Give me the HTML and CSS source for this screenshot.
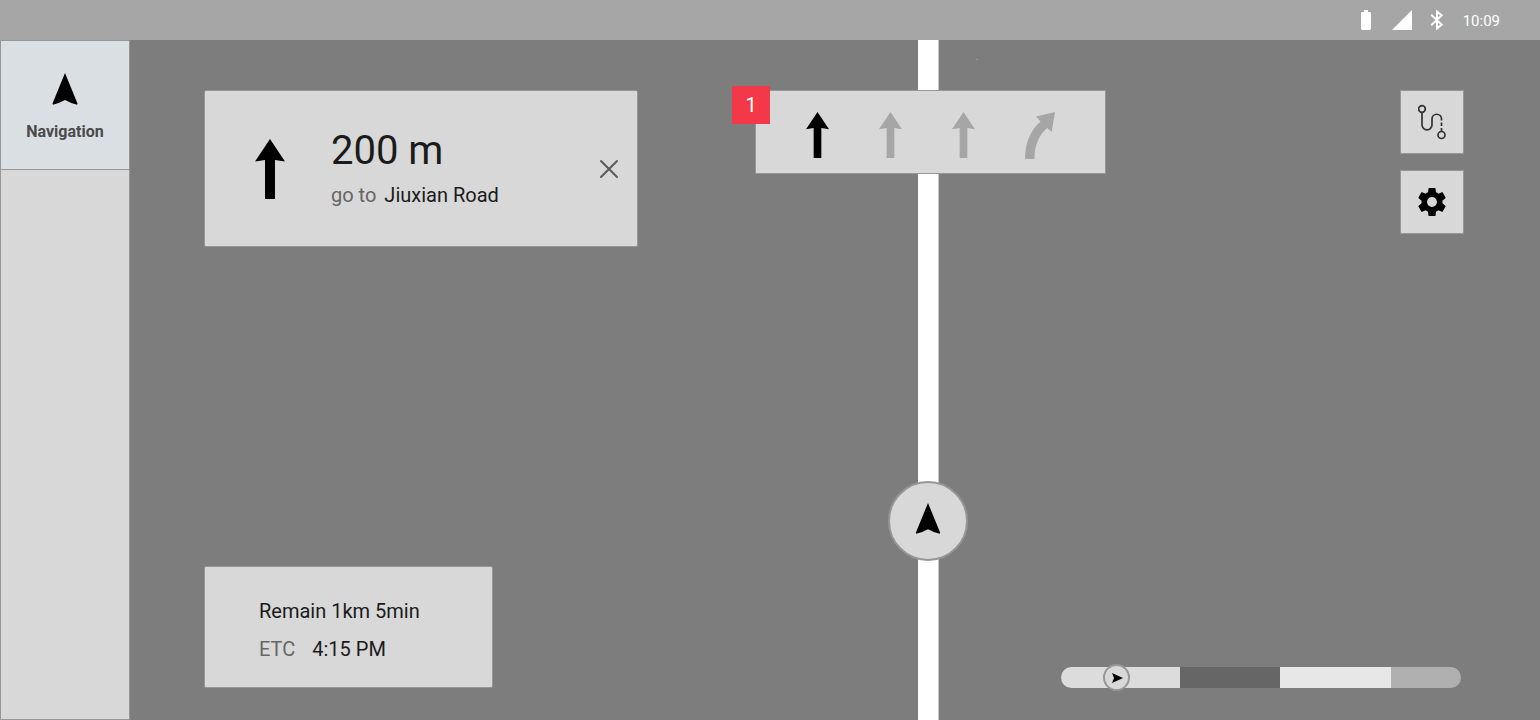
FILE: index.html
```html
<!DOCTYPE html>
<html lang="en">
<head>
<meta charset="utf-8">
<title>Navigation</title>
<link rel="stylesheet" href="styles.css">
</head>
<body>
<svg class="symbols" aria-hidden="true">
  <symbol id="pointer" viewBox="0 0 26 32"><path d="M13 0 L25.5 30.5 Q25.600 31.800 24.300 31.600 Q18.500 30 13 27 Q7.500 30 1.700 31.600 Q.4 31.800 .5 30.500 Z"/></symbol>
  <symbol id="straight" viewBox="0 0 30 60"><path d="M15 0 L30 22.500 L20 21 V60 H10 V21 L0 22.500 Z"/></symbol>
</svg>
<header class="status">
  <svg class="status-battery" viewBox="0 0 10 20" role="img" aria-label="Battery"><path d="M3 0 H7 V2 H8.600 Q10 2 10 3.400 V18.600 Q10 20 8.600 20 H1.400 Q0 20 0 18.600 V3.400 Q0 2 1.400 2 H3 Z"/></svg>
  <svg class="status-signal" viewBox="0 0 20 20" role="img" aria-label="Signal"><path d="M20 0 V20 H0 Z"/></svg>
  <svg class="status-bluetooth" viewBox="0 0 14 20" role="img" aria-label="Bluetooth"><path d="M1.200 4.800 L11.700 14.600 L7 18.500 V1.500 L11.700 5.400 L1.200 15.200"/></svg>
  <time class="status-time">10:09</time>
</header>
<div class="shell">
  <nav class="sidebar">
    <a class="sidebar-item" href="#navigation">
      <svg class="sidebar-icon" aria-hidden="true"><use href="#pointer"/></svg>
      <span>Navigation</span>
    </a>
  </nav>
  <main class="map">
    <div class="road"></div>
    <span class="map-dot"></span>
    <div class="vehicle"><svg class="vehicle-icon" aria-hidden="true"><use href="#pointer"/></svg></div>

    <section class="panel guidance">
      <svg class="guidance-arrow" role="img" aria-label="Straight ahead"><use href="#straight"/></svg>
      <div class="guidance-text">
        <h1 class="distance">200 m</h1>
        <p class="line"><span class="muted">go to</span><span>Jiuxian Road</span></p>
      </div>
      <button class="close" type="button" aria-label="Close"><svg viewBox="0 0 20 20"><path d="M2 2 L18 18 M18 2 L2 18"/></svg></button>
    </section>

    <section class="panel lanes">
      <span class="badge">1</span>
      <svg class="lane lane-active" aria-hidden="true"><use href="#straight"/></svg>
      <svg class="lane" aria-hidden="true"><use href="#straight"/></svg>
      <svg class="lane" aria-hidden="true"><use href="#straight"/></svg>
      <svg class="lane lane-bend" viewBox="0 0 30 47" aria-hidden="true"><path d="M30 0 L26.700 20 L22.300 16 C14 23 9.500 33 9.500 47 H0 C0 31 5.500 18 15.500 9.500 L11 4.500 Z"/></svg>
    </section>

    <div class="tools">
      <button class="panel tool" type="button" aria-label="Route">
        <svg class="route-icon" viewBox="0 0 28 36"><circle cx="4" cy="5" r="3.300"/><circle cx="23.500" cy="31" r="3.500"/><path d="M4 8.500 V20.800 A5 5 0 0 0 14 20.800 V15 A4.750 4.750 0 0 1 23.500 15 V16.500 M23.500 18.500 V22 M23.500 24 V27.500"/></svg>
      </button>
      <button class="panel tool" type="button" aria-label="Settings">
        <svg class="gear-icon" viewBox="2 2 20 20"><path fill-rule="evenodd" d="M19.430 12.980c.04-.32.070-.64.070-.98s-.03-.66-.07-.98l2.110-1.650c.19-.15.240-.42.120-.64l-2-3.460c-.12-.22-.39-.3-.61-.22l-2.490 1c-.52-.4-1.080-.73-1.690-.98l-.38-2.650C14.460 2.180 14.250 2 14 2h-4c-.25 0-.46.180-.49.420l-.38 2.650c-.61.250-1.170.590-1.690.980l-2.490-1c-.23-.09-.49 0-.61.220l-2 3.460c-.13.220-.07.490.120.640l2.110 1.650c-.04.320-.07.650-.07.980s.03.660.070.980l-2.110 1.650c-.19.150-.24.420-.12.640l2 3.460c.12.220.39.300.61.220l2.490-1c.52.400 1.080.730 1.690.980l.38 2.650c.03.240.24.420.49.420h4c.25 0 .46-.18.490-.42l.38-2.650c.61-.25 1.170-.59 1.690-.98l2.490 1c.23.090.49 0 .61-.22l2-3.460c.12-.22.070-.49-.12-.64l-2.110-1.650zM12 15.500c-1.930 0-3.500-1.570-3.500-3.500s1.570-3.500 3.500-3.500 3.500 1.570 3.500 3.500-1.570 3.500-3.500 3.500z"/></svg>
      </button>
    </div>

    <section class="panel trip">
      <p class="line">Remain 1km 5min</p>
      <p class="line line-wide"><span class="muted">ETC</span><span>4:15 PM</span></p>
    </section>

    <div class="progress" role="img" aria-label="Route traffic">
      <div class="track"><span class="leg leg-done"></span><span class="leg leg-slow"></span><span class="leg leg-clear"></span><span class="leg leg-rest"></span></div>
      <span class="marker"><svg class="marker-icon" viewBox="0 0 12 10"><path d="M1 0 L12 5 L1 10 L3 5 Z"/></svg></span>
    </div>
  </main>
</div>
</body>
</html>
```
FILE: styles.css
```css
* { box-sizing: border-box; }

body {
  margin: 0;
  min-height: 100vh;
  display: flex;
  flex-direction: column;
  font: 20px/24px Roboto, "Liberation Sans", sans-serif;
  color: #1b1b1b;
  background: #7d7d7d;
}

h1, p { margin: 0; font-weight: 400; }
svg { display: block; flex: none; }
button { font: inherit; color: inherit; cursor: pointer; }
.symbols { position: absolute; width: 0; height: 0; }

.status {
  display: flex;
  align-items: center;
  justify-content: flex-end;
  height: 40px;
  padding-right: 40px;
  background: #a6a6a6;
  color: #fff;
  fill: #fff;
}
.status-battery { width: 10px; height: 20px; margin-right: 21px; }
.status-signal { width: 20px; height: 20px; margin-right: 18px; }
.status-bluetooth { width: 14px; height: 20px; margin-right: 19px; fill: none; stroke: #fff; stroke-width: 2; }
.status-time { font-size: 15px; line-height: 26px; padding-top: 2px; }

.shell { flex: 1; display: flex; }

.sidebar {
  width: 130px;
  flex: none;
  background: #d8d8d8;
  border: 1px solid #979797;
}
.sidebar-item {
  display: flex;
  flex-direction: column;
  align-items: center;
  gap: 15px;
  height: 129px;
  padding-top: 32px;
  background: #dadfe3;
  border-bottom: 1px solid #979797;
  color: #4a4a4a;
  font-size: 16px;
  font-weight: 700;
  text-decoration: none;
}
.sidebar-icon { width: 26px; height: 32px; fill: #000; }

.map { position: relative; flex: 1; overflow: hidden; }

.road {
  position: absolute;
  top: 0;
  bottom: 0;
  left: 56.6%;
  width: 21px;
  margin-left: -10px;
  background: #fff;
  border: 0 solid #c8c8c8;
  border-right-width: 1px;
}
.map-dot {
  position: absolute;
  top: 19px;
  left: 60%;
  width: 2px;
  height: 1px;
  background: #979797;
}
.vehicle {
  position: absolute;
  left: 56.6%;
  bottom: 159px;
  width: 80px;
  height: 80px;
  margin-left: -40px;
  display: grid;
  place-items: center;
  padding-bottom: 5px;
  border: 2px solid #979797;
  border-radius: 50%;
  background: #d8d8d8;
}
.vehicle-icon { width: 26px; height: 31px; }

.panel { background: #d8d8d8; border: 1px solid #979797; }

.guidance {
  position: absolute;
  top: 50px;
  left: 74px;
  width: 434px;
  display: flex;
  align-items: center;
  padding: 36px 18px 39px 50px;
  border-radius: 2px;
}
.guidance-arrow { width: 30px; height: 60px; margin-top: 4px; }
.guidance-text { flex: 1; padding-left: 46px; }
.distance { font-size: 40px; line-height: 48px; margin-bottom: 8px; }
.line { display: flex; gap: 8px; }
.line-wide { gap: 17px; }
.muted { color: #666; }
.close { padding: 4px 0 0; border: 0; background: none; }
.close svg { width: 20px; height: 20px; fill: none; stroke: #5a5a5a; stroke-width: 2; stroke-linecap: round; }

.lanes {
  position: absolute;
  top: 50px;
  left: 56.6%;
  width: 351px;
  height: 84px;
  margin-left: -173px;
  display: flex;
  align-items: center;
  justify-content: space-between;
  padding: 6px 50px 0;
}
.lane { width: 23px; height: 46px; fill: #a6a6a6; }
.lane-active { fill: #000; }
.lane-bend { width: 30px; height: 47px; }
.badge {
  position: absolute;
  top: -5px;
  left: -24px;
  width: 38px;
  height: 38px;
  background: #f23849;
  color: #fff;
  line-height: 38px;
  text-align: center;
}

.tools {
  position: absolute;
  top: 50px;
  right: 76px;
  display: flex;
  flex-direction: column;
  gap: 16px;
}
.tool { width: 64px; height: 64px; padding: 0; display: grid; place-items: center; }
.route-icon { width: 28px; height: 36px; fill: none; stroke: #333; stroke-width: 1.7; }
.gear-icon { width: 28px; height: 28px; }

.trip {
  position: absolute;
  left: 74px;
  bottom: 32px;
  width: 289px;
  display: flex;
  flex-direction: column;
  gap: 14px;
  padding: 32px 54px 26px;
  border-radius: 2px;
}

.progress { position: absolute; right: 79px; bottom: 32px; width: 400px; }
.track { display: flex; height: 21px; border-radius: 11px; overflow: hidden; }
.leg-done { flex: 119; background: #dcdcdc; }
.leg-slow { flex: 100; background: #666; }
.leg-clear { flex: 111; background: #e7e7e7; }
.leg-rest { flex: 70; background: #b0b0b0; }
.marker {
  position: absolute;
  top: -3px;
  left: 42px;
  width: 27px;
  height: 27px;
  display: grid;
  place-items: center;
  border: 2px solid #979797;
  border-radius: 50%;
  background: #d8d8d8;
}
.marker-icon { width: 12px; height: 10px; }
```
